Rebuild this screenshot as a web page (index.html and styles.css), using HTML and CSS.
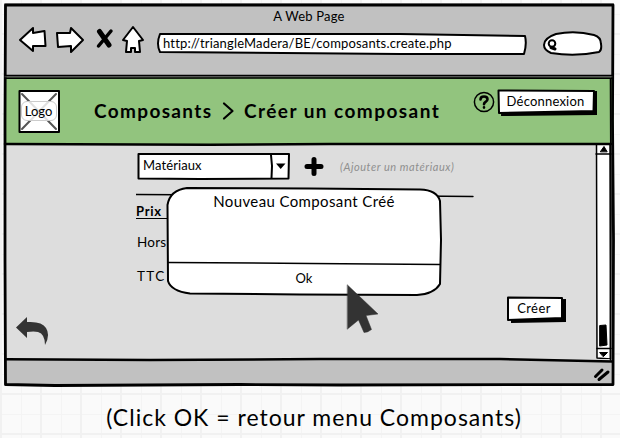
FILE: index.html
```html
<!DOCTYPE html>
<html lang="fr">
<head>
<meta charset="utf-8">
<title>A Web Page</title>
<link rel="stylesheet" href="styles.css">
</head>
<body>
<main class="window">
  <header class="chrome">
    <div class="page-title"><span>A Web Page</span></div>
    <div class="toolbar">
      <svg class="ic-left" viewBox="18 26 30 30"><path d="M20 40 L33 28 L33 33 L44.500 31 L45.500 46 L33 46 L33 51 Z"/></svg>
      <svg class="ic-right" viewBox="54 26 32 30"><path d="M57 33 L70 33 L71 28 L83 40 L71 52 L71 46 L58 47 Z"/></svg>
      <svg class="ic-stop" viewBox="95 26 19 30"><path class="wide" d="M99.500 31.500 L109 45"/><path class="mid" d="M111 31 L98.500 46"/></svg>
      <svg class="ic-home" viewBox="120 25 26 30"><path d="M133 27 L123 40 L127 41 L126 52 L131 52 L131 48 L135 48 L135 52 L140 52 L139 41 L143 40 Z"/></svg>
      <div class="url">
        <svg class="sketch" viewBox="156 32 373 24"><path d="M160 34 L400 34 L525 36 Q527 44 524 54 L400 54 L160 52 Q156 44 160 34 Z"/></svg>
        <span>http://triangleMadera/BE/composants.create.php</span>
      </div>
      <svg class="search" viewBox="542 30 62 28"><path d="M556 34 Q575 30 594 35 Q601 37 601 44 Q602 50 599 52 Q575 57 551 53 Q544 50 544 45 Q544 38 556 34 Z"/><circle cx="552" cy="43.500" r="3.300"/><path class="wide" d="M551 47.500 L555 49"/></svg>
    </div>
  </header>

  <section class="banner">
    <div class="logo">
      <svg class="sketch" viewBox="18 89 43 45"><path d="M19.500 91 L59 91 L59 132 L19.500 132 Z"/><path class="cross" d="M22 94 L56 129 M56 94 L22 129"/></svg>
      <span>Logo</span>
    </div>
    <h1><span class="crumb-a">Composants</span><svg class="chevron" viewBox="221 102 14 20"><path d="M224 104.500 L232.500 112 L224 119.500"/></svg><span class="crumb-b">Créer un composant</span></h1>
    <svg class="help" viewBox="473 91 22 22"><circle cx="484" cy="102" r="9.600"/><path d="M480.500 99.500 Q480.500 96.500 484 96.500 Q487.500 96.500 487.500 99.300 Q487.500 101 485.500 102 Q484 102.800 484 104.200 M484 107.300 L484 107.600"/></svg>
    <button class="btn logout"><svg class="sketch" viewBox="497 89 101 27"><path class="shadow" d="M502 93 L597 91 L597 115 L501 116 Z"/><path d="M498.500 90.500 L594 91 L593.500 111 L499 113 Z"/></svg><span>Déconnexion</span></button>
  </section>

  <section class="content">
    <aside>
      <svg class="back" viewBox="15 316 34 31"><path d="M16 327.500 L27 317 L27 322 Q42 321 46 328 Q50.500 335 45 345 Q45 334 38 332 Q34 331 27 332 L27 338 Z"/></svg>
    </aside>
    <div class="form">
      <div class="picker">
        <div class="select">
          <svg class="sketch" viewBox="136 152 155 29"><path d="M138.500 154 L289 154 L288.500 178.500 L200 179 L138.500 178.500 Z"/><path d="M271 155 L272 166 L271.500 178"/><path class="shadow" d="M276 163.500 H285.500 L280.700 169 Z"/></svg>
          <span>Matériaux</span>
        </div>
        <svg class="plus" viewBox="304 156 20 20"><path d="M307 165.500 H321 M314 158.500 V172.500"/></svg>
        <em>(Ajouter un matériaux)</em>
      </div>
      <svg class="rule" viewBox="136 193 338 5"><path d="M136 194.500 L220 195 L360 195.500 L473 196.500"/></svg>
      <h2>Prix</h2>
      <p class="row hors">Hors</p>
      <p class="row ttc">TTC</p>
      <button class="btn create"><svg class="sketch" viewBox="506 296 61 27"><path class="shadow" d="M511 300 L566 299 L566 322 L511 323 Z"/><path d="M508 297.500 L562 298 L562 318 L508 320 Z"/></svg><span>Créer</span></button>
    </div>
    <svg class="scroll" viewBox="595 145 20 215"><path class="track" d="M596.500 145 L597 359 L610.500 360 L610 145 Z"/><path d="M596 155 H611 M597 349.500 H611"/><path class="ink" d="M600.500 152.500 L604 147.500 L607 152.500 Z M600 353.500 H607.500 L603.500 357.500 Z M600 326.500 L606 326 L607 346 L600 347 Z"/></svg>
  </section>

  <footer class="status">
    <svg class="grip" viewBox="592 364 20 20"><path d="M595.500 376.500 L602 370 M599 379.500 L608 372"/></svg>
  </footer>

  <svg class="outline" viewBox="3 2 612 386">
    <path d="M5.500 5 L300 5 L613 5 L612.500 120 L613.500 240 L613 384.500 L340 385 L240 384.500 L55 385.500 L5.500 384.500 L5 260 L5 120 Z"/>
    <path class="thin" d="M5 75.500 L612 75.500"/>
    <path class="between" d="M5 76.800 L612 76.800"/>
    <path class="thin" d="M5 78.200 L300 78 L612 78.200"/>
    <path class="edge" d="M5 144 L210 144.800 L330 144 L611 144 M6 359.300 L150 360 L320 359 L500 359 L612 361.500"/>
    <path class="thin" d="M610.500 79 L611 210 L610.500 360"/>
  </svg>

  <div class="dialog">
    <svg class="sketch" viewBox="165 186 278 111"><path d="M187 188 L310 188.500 L420 189.500 Q437 190 440 201 L441 240 L440 284 Q434 294 417 295 L300 294.500 L190 293.500 Q171 291 168 281 L167.500 205 Q170 190 187 188 Z"/><path class="fine" d="M168 262.500 L310 263.500 L440 264.500"/></svg>
    <p class="message"><span>Nouveau Composant Créé</span></p>
    <p class="ok">Ok</p>
  </div>
  <svg class="cursor" viewBox="346 284 34 50"><path d="M347.500 285 L378 314 L366 315.500 L371.500 329.500 Q368 332.500 364 332.500 L358.500 320 L347.500 329 Z"/></svg>
</main>
<p class="caption"><span>(Click OK = retour menu Composants)</span></p>
</body>
</html>
```
FILE: styles.css
```css
* { box-sizing: border-box; }
body {
  margin: 0;
  padding: 3px 0 0 4px;
  width: 620px;
  height: 438px;
  overflow: hidden;
  font-family: Lato, "Open Sans", sans-serif;
  font-size: 13px;
  color: #000;
  background-color: #fafafa;
  background-image:
    linear-gradient(90deg, #f1f1f1 2px, transparent 2px),
    linear-gradient(#f1f1f1 2px, transparent 2px),
    linear-gradient(90deg, #f4f4f4 1px, transparent 1px),
    linear-gradient(#f4f4f4 1px, transparent 1px);
  background-size: 40px 40px;
  background-position: 0 0, 0 33px, 21px 0, 0 14px;
}
svg { display: block; fill: #fff; stroke: #000; stroke-width: 2; stroke-linejoin: round; stroke-linecap: round; flex: none; }
h1, h2, p { margin: 0; }
span { position: relative; white-space: nowrap; }
.sketch { position: absolute; inset: 0; width: 100%; height: 100%; }
.shadow { fill: #000; stroke: none; }

.window { position: relative; width: 610px; height: 383px; display: flex; flex-direction: column; }
.outline { position: absolute; left: -1px; top: -1px; width: 612px; height: 386px; pointer-events: none; }
.outline path { fill: none; stroke-width: 2.800; }
.outline .thin { stroke-width: 1.600; }
.outline .between { stroke: #444; stroke-width: 1.200; }
.outline .edge { stroke-width: 2.500; }

.chrome { height: 74px; background: #c1c1c1; }
.page-title { height: 23px; padding-top: 4px; text-align: center; line-height: 18px; font-size: 13px; letter-spacing: .2px; }
.toolbar { display: flex; height: 30px; padding-left: 14px; }
.ic-left { width: 30px; height: 30px; }
.ic-right { width: 32px; height: 30px; margin-left: 6px; }
.ic-stop { width: 19px; height: 30px; margin-left: 9px; }
.ic-stop .wide { stroke-width: 5; }
.ic-stop .mid { stroke-width: 3.500; }
.ic-home { width: 26px; height: 30px; margin: -1px 0 0 6px; }
.url { position: relative; width: 373px; height: 24px; margin: 6px 0 0 10px; padding-left: 7px; line-height: 23px; font-size: 13px; letter-spacing: .17px; }
.search { width: 62px; height: 28px; margin: 4px 0 0 13px; }
.search .wide { stroke-width: 3; }

.banner { display: flex; height: 67px; padding-left: 14px; background: #92c47e; }
.logo { position: relative; flex: none; width: 43px; height: 45px; margin-top: 12px; display: flex; align-items: center; justify-content: center; }
.logo .cross { stroke: #555; }
.logo span { top: -1px; left: -1px; width: 36px; height: 20px; line-height: 19px; text-align: center; border-radius: 6px; border: 1px solid #ccc; background: rgba(255,255,255,.82); font-size: 13px; }
h1 { display: flex; flex: none; align-items: center; width: 393px; height: 67px; padding-left: 33px; font-size: 19px; font-weight: 700; }
.crumb-a { width: 127px; letter-spacing: 1.350px; }
.crumb-b { margin-left: 9px; letter-spacing: 1.450px; }
.chevron { width: 14px; height: 20px; fill: none; stroke-width: 2.200; }
.help { width: 22px; height: 22px; margin: 14px 0 0 19px; fill: none; stroke-width: 1.500; }
.help path { stroke-width: 2.600; }

.btn { position: relative; flex: none; border: 0; background: none; padding: 0; text-align: center; font: 13px Lato, sans-serif; color: #000; letter-spacing: .4px; }
.logout { width: 101px; height: 27px; margin: 12px 0 0 2px; padding: 0 4px 3px 0; letter-spacing: .2px; }
.create { width: 61px; height: 27px; margin: 11px 0 0 370px; padding: 0 5px 3px 0; }

.content { display: flex; height: 216px; background: #ddd; }
aside { display: flex; align-items: flex-end; width: 132px; padding: 0 0 13px 11px; }
.back { width: 34px; height: 31px; fill: #333; stroke: none; }
.form { width: 459px; padding-top: 8px; }
.picker { display: flex; align-items: center; height: 29px; }
.select { position: relative; width: 155px; height: 29px; padding-left: 7px; line-height: 27px; letter-spacing: .1px; }
.plus { width: 20px; height: 20px; margin-left: 13px; stroke-width: 5; }
em { margin-left: 16px; font-size: 11px; letter-spacing: .55px; color: #8f8f8f; white-space: nowrap; }
.rule { width: 338px; height: 5px; margin-top: 12px; stroke-width: 1.400; fill: none; }
h2 { width: 48px; height: 21px; border-bottom: 1px solid #000; font-size: 13px; line-height: 27px; letter-spacing: .7px; }
.row { font-size: 13.500px; line-height: 18px; letter-spacing: .2px; padding-left: 1px; }
.hors { margin-top: 14px; }
.ttc { margin-top: 16px; letter-spacing: 1.400px; }
.scroll { width: 20px; height: 215px; stroke-width: 1.500; margin-right: -1px; }
.scroll .ink { fill: #000; stroke-width: 1; }
.status { display: flex; justify-content: flex-end; height: 26px; padding: 4px 2px 0 0; background: #c1c1c1; }
.grip { width: 20px; height: 20px; fill: none; stroke-width: 3; }

.dialog { position: absolute; left: 161px; top: 183px; width: 278px; height: 111px; text-align: center; }
.dialog .fine { stroke-width: 1.500; }
.message { height: 77px; padding-top: 5px; font-size: 15px; line-height: 20px; letter-spacing: .38px; }
.ok { position: relative; line-height: 30px; font-size: 13px; }
.cursor { position: absolute; left: 342px; top: 281px; width: 34px; height: 50px; fill: #333; stroke: #333; stroke-width: .5; }
.caption { width: 620px; padding-top: 13px; text-align: center; font-size: 23px; line-height: 36px; letter-spacing: 1px; }
```
